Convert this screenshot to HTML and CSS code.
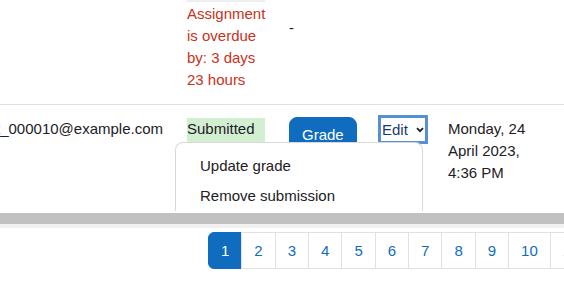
FILE: index.html
```html
<!DOCTYPE html>
<html lang="en">
<head>
    <meta charset="UTF-8">
    <meta name="viewport" content="width=device-width, initial-scale=1.0">
    <title>Submissions | Assignment</title>
    <link rel="stylesheet" href="styles.css">
</head>
<body>
    <div class="table-wrap">
        <div class="row row-first">
            <div class="cell cell-email"></div>
            <div class="cell cell-status">
                <div class="status-none"></div>
                <div class="overdue">Assignment is overdue by: 3 days 23 hours</div>
            </div>
            <div class="cell cell-grade cell-dash">-</div>
            <div class="cell"></div>
            <div class="cell"></div>
        </div>

        <div class="row row-open">
            <div class="cell cell-email"><span>student_000010@example.com</span></div>
            <div class="cell cell-status">
                <div class="status-submitted">Submitted</div>
            </div>
            <div class="cell cell-grade">
                <button type="button" class="btn-grade">Grade</button>
            </div>
            <div class="cell cell-edit">
                <span class="edit-select">Edit
                    <svg width="8" height="6" viewBox="0 0 8 6"><path d="M1 1.2 L4 4.2 L7 1.2" fill="none" stroke="#1d2125" stroke-width="1.9"/></svg>
                </span>
            </div>
            <div class="cell cell-date">Monday, 24 April 2023, 4:36 PM</div>
        </div>

        <!-- menu opened from the Edit select, clipped by the table wrapper -->
        <div class="dropdown-menu">
            <a href="#" class="dropdown-item">Update grade</a>
            <a href="#" class="dropdown-item">Remove submission</a>
        </div>
    </div>

    <div class="scrollbar"><div class="thumb"></div></div>

    <nav class="pager">
        <ul>
            <li class="active"><a href="#">1</a></li>
            <li><a href="#">2</a></li>
            <li><a href="#">3</a></li>
            <li><a href="#">4</a></li>
            <li><a href="#">5</a></li>
            <li><a href="#">6</a></li>
            <li><a href="#">7</a></li>
            <li><a href="#">8</a></li>
            <li><a href="#">9</a></li>
            <li><a href="#">10</a></li>
            <li><a href="#">11</a></li>
            <li><a href="#">12</a></li>
        </ul>
    </nav>
</body>
</html>
```

FILE: styles.css
```css
html, body {
    overflow: hidden;
}
body {
    font-family: "Liberation Sans", Arial, sans-serif;
    font-size: 15px;
    line-height: 22px;
    color: #1d2125;
    background: #fff;
    margin: 0;
    padding: 0;
}
.table-wrap {
    position: relative;
    height: 211px;
    overflow: hidden;
}
.row {
    display: grid;
    grid-template-columns: 175px 102px 89px 70px 1fr;
    border-bottom: 1px solid #dee2e6;
    padding-top: 13px;
}
.row-first {
    padding-top: 0;
    padding-bottom: 13px;
}
.row-open {
    border-bottom: none;
}
.cell {
    padding: 0 12px;
    min-width: 0;
}
.cell-email {
    display: flex;
    justify-content: flex-end;
    overflow: hidden;
    white-space: nowrap;
}
.status-none {
    height: 2px;
    background: #eeeeee;
}
.overdue {
    margin-top: 1px;
    color: #ca3120;
}
.cell-dash {
    padding-top: 17px;
}
.status-submitted {
    background: #d3efd2;
    padding-bottom: 4px;
}
.btn-grade {
    margin-top: -1px;
    font-family: inherit;
    font-size: 15px;
    line-height: 22px;
    color: #fff;
    background: #0f6cbf;
    border: 1px solid #0f6cbf;
    border-radius: 8px;
    padding: 6px 12px;
    cursor: pointer;
}
.edit-select {
    display: flex;
    align-items: center;
    gap: 8px;
    box-sizing: border-box;
    width: 50px;
    height: 29px;
    margin-top: -3px;
    padding-left: 1px;
    border: 3px solid #5490d4;
    color: #1a3a6b;
    background: #fff;
}
.cell-date {
    padding-right: 30px;
}
.dropdown-menu {
    position: absolute;
    left: 175px;
    top: 142px;
    width: 246px;
    padding: 8px 0;
    background: #fff;
    border: 1px solid rgba(0, 0, 0, 0.15);
    border-radius: 8px;
}
.dropdown-item {
    display: block;
    padding: 4px 24px;
    color: #1d2125;
    text-decoration: none;
    white-space: nowrap;
}
.scrollbar {
    height: 15px;
    background: #f1f1f1;
}
.thumb {
    height: 11px;
    margin-top: 2px;
    background: #c1c1c1;
}
.pager ul {
    display: flex;
    list-style: none;
    margin: 4px 0 0;
    padding: 0 0 0 208px;
}
.pager li {
    margin-left: -1px;
}
.pager li:first-child {
    margin-left: 0;
}
.pager a {
    display: block;
    padding: 8px 12px;
    line-height: 19px;
    color: #0f6cbf;
    text-decoration: none;
    border: 1px solid #dee2e6;
    background: #fff;
}
.pager li:first-child a {
    border-radius: 6px 0 0 6px;
}
.pager li.active a {
    background: #0f6cbf;
    border-color: #0f6cbf;
    color: #fff;
}
```
